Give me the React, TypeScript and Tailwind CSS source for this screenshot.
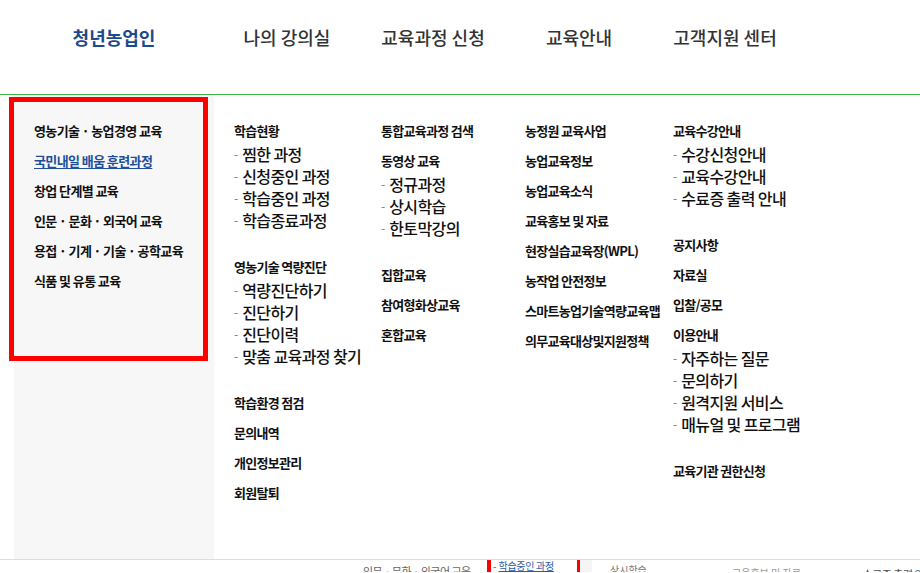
import React from "react";

type Group = { h: string; subs?: string[] };

const col1: Group[] = [
  { h: "학습현황", subs: ["찜한 과정", "신청중인 과정", "학습중인 과정", "학습종료과정"] },
  { h: "영농기술 역량진단", subs: ["역량진단하기", "진단하기", "진단이력", "맞춤 교육과정 찾기"] },
  { h: "학습환경 점검" },
  { h: "문의내역" },
  { h: "개인정보관리" },
  { h: "회원탈퇴" },
];

const col2: Group[] = [
  { h: "통합교육과정 검색" },
  { h: "동영상 교육", subs: ["정규과정", "상시학습", "한토막강의"] },
  { h: "집합교육" },
  { h: "참여형화상교육" },
  { h: "혼합교육" },
];

const col3: Group[] = [
  { h: "농정원 교육사업" },
  { h: "농업교육정보" },
  { h: "농업교육소식" },
  { h: "교육홍보 및 자료" },
  { h: "현장실습교육장(WPL)" },
  { h: "농작업 안전정보" },
  { h: "스마트농업기술역량교육맵" },
  { h: "의무교육대상및지원정책" },
];

const col4: Group[] = [
  { h: "교육수강안내", subs: ["수강신청안내", "교육수강안내", "수료증 출력 안내"] },
  { h: "공지사항" },
  { h: "자료실" },
  { h: "입찰/공모" },
  { h: "이용안내", subs: ["자주하는 질문", "문의하기", "원격지원 서비스", "매뉴얼 및 프로그램"] },
  { h: "교육기관 권한신청" },
];

const leftMenu = [
  "영농기술 · 농업경영 교육",
  "국민내일 배움 훈련과정",
  "창업 단계별 교육",
  "인문 · 문화 · 외국어 교육",
  "용접 · 기계 · 기술 · 공학교육",
  "식품 및 유통 교육",
];

function Column({ groups, width }: { groups: Group[]; width: string }) {
  return (
    <div className={`flex flex-col ${width}`}>
      {groups.map((g) => (
        <div key={g.h} className="flex flex-col">
          <div className="h-[30px] leading-[30px] text-[13px] font-bold tracking-[-0.7px] text-[#111] whitespace-nowrap">
            {g.h}
          </div>
          {g.subs && (
            <div className="flex flex-col mt-[-3px] mb-[21px]">
              {g.subs.map((s) => (
                <div key={s} className="h-[22px] flex items-center whitespace-nowrap">
                  <span className="text-[12px] text-[#777] mr-[4px] leading-none">-</span>
                  <span className="text-[16px] font-medium tracking-[-0.6px] text-[#111] leading-none">{s}</span>
                </div>
              ))}
            </div>
          )}
        </div>
      ))}
    </div>
  );
}

export default function App() {
  return (
    <div className="w-[920px] h-[573px] overflow-hidden bg-white font-['Noto_Sans_CJK_KR','Noto_Sans',sans-serif]">
      {/* Header */}
      <header className="h-[95px] border-b border-[#3cb44b] flex">
        <div className="h-[75px] flex items-center">
          <div className="w-[214px] flex justify-center pl-[14px]">
            <span className="text-[18px] font-bold text-[#1d4a8b]">청년농업인</span>
          </div>
          {["나의 강의실", "교육과정 신청", "교육안내", "고객지원 센터"].map((t) => (
            <div key={t} className="w-[146px] flex justify-center">
              <span className="text-[18px] font-medium text-[#333]">{t}</span>
            </div>
          ))}
        </div>
      </header>

      {/* Mega menu */}
      <div className="flex h-[465px] border-b border-[#ddd]">
        <div className="relative ml-[14px] w-[200px] bg-[#f7f7f7] pt-[21px] pl-[20px]">
          {leftMenu.map((m, i) => (
            <div
              key={m}
              className={`h-[30px] leading-[30px] text-[13px] font-bold tracking-[-0.6px] whitespace-nowrap ${
                i === 1 ? "text-[#1f4f9c] underline underline-offset-2" : "text-[#111]"
              }`}
            >
              {m}
            </div>
          ))}
          <div className="absolute left-[-5px] top-[2px] w-[199px] h-[264px] border-[5px] border-[#ff0000] pointer-events-none" />
        </div>
        <div className="flex pl-[20px] pt-[21px]">
          <Column groups={col1} width="w-[147px]" />
          <Column groups={col2} width="w-[144px]" />
          <Column groups={col3} width="w-[148px]" />
          <Column groups={col4} width="w-[200px]" />
        </div>
      </div>

      {/* Cut-off content below */}
      <div className="h-[12px] flex overflow-hidden">
        <div className="w-[363px]" />
        <div className="w-[124px] pt-[4px] text-[11px] leading-[14px] text-[#666] tracking-[-0.5px] whitespace-nowrap">
          인문 · 문화 · 외국어 교육
        </div>
        <div className="w-[4px] bg-[#ff0000]" />
        <div className="w-[86px] pl-[2px] flex items-start whitespace-nowrap">
          <span className="text-[10px] leading-[11px] text-[#555] mr-[2px]">-</span>
          <span className="text-[10px] leading-[11px] text-[#2b5ba8] underline tracking-[-0.3px]">학습중인 과정</span>
        </div>
        <div className="w-[3px] bg-[#ff0000]" />
        <div className="w-[12px] bg-[#f5f5f5]" />
        <div className="w-[18px]" />
        <div className="w-[122px] pt-[4px] text-[10px] leading-[12px] text-[#777] whitespace-nowrap">상시학습</div>
        <div className="w-[125px] pt-[7px] text-[10px] leading-[12px] text-[#999] whitespace-nowrap">교육홍보 및 자료</div>
        <div className="flex-1 whitespace-nowrap overflow-hidden">
          <span className="text-[10px] leading-[11px] text-[#666] mr-[2px]">-</span>
          <span className="text-[11px] leading-[11px] text-[#555] tracking-[-0.5px]">수료증 출력 안내</span>
        </div>
      </div>
    </div>
  );
}
